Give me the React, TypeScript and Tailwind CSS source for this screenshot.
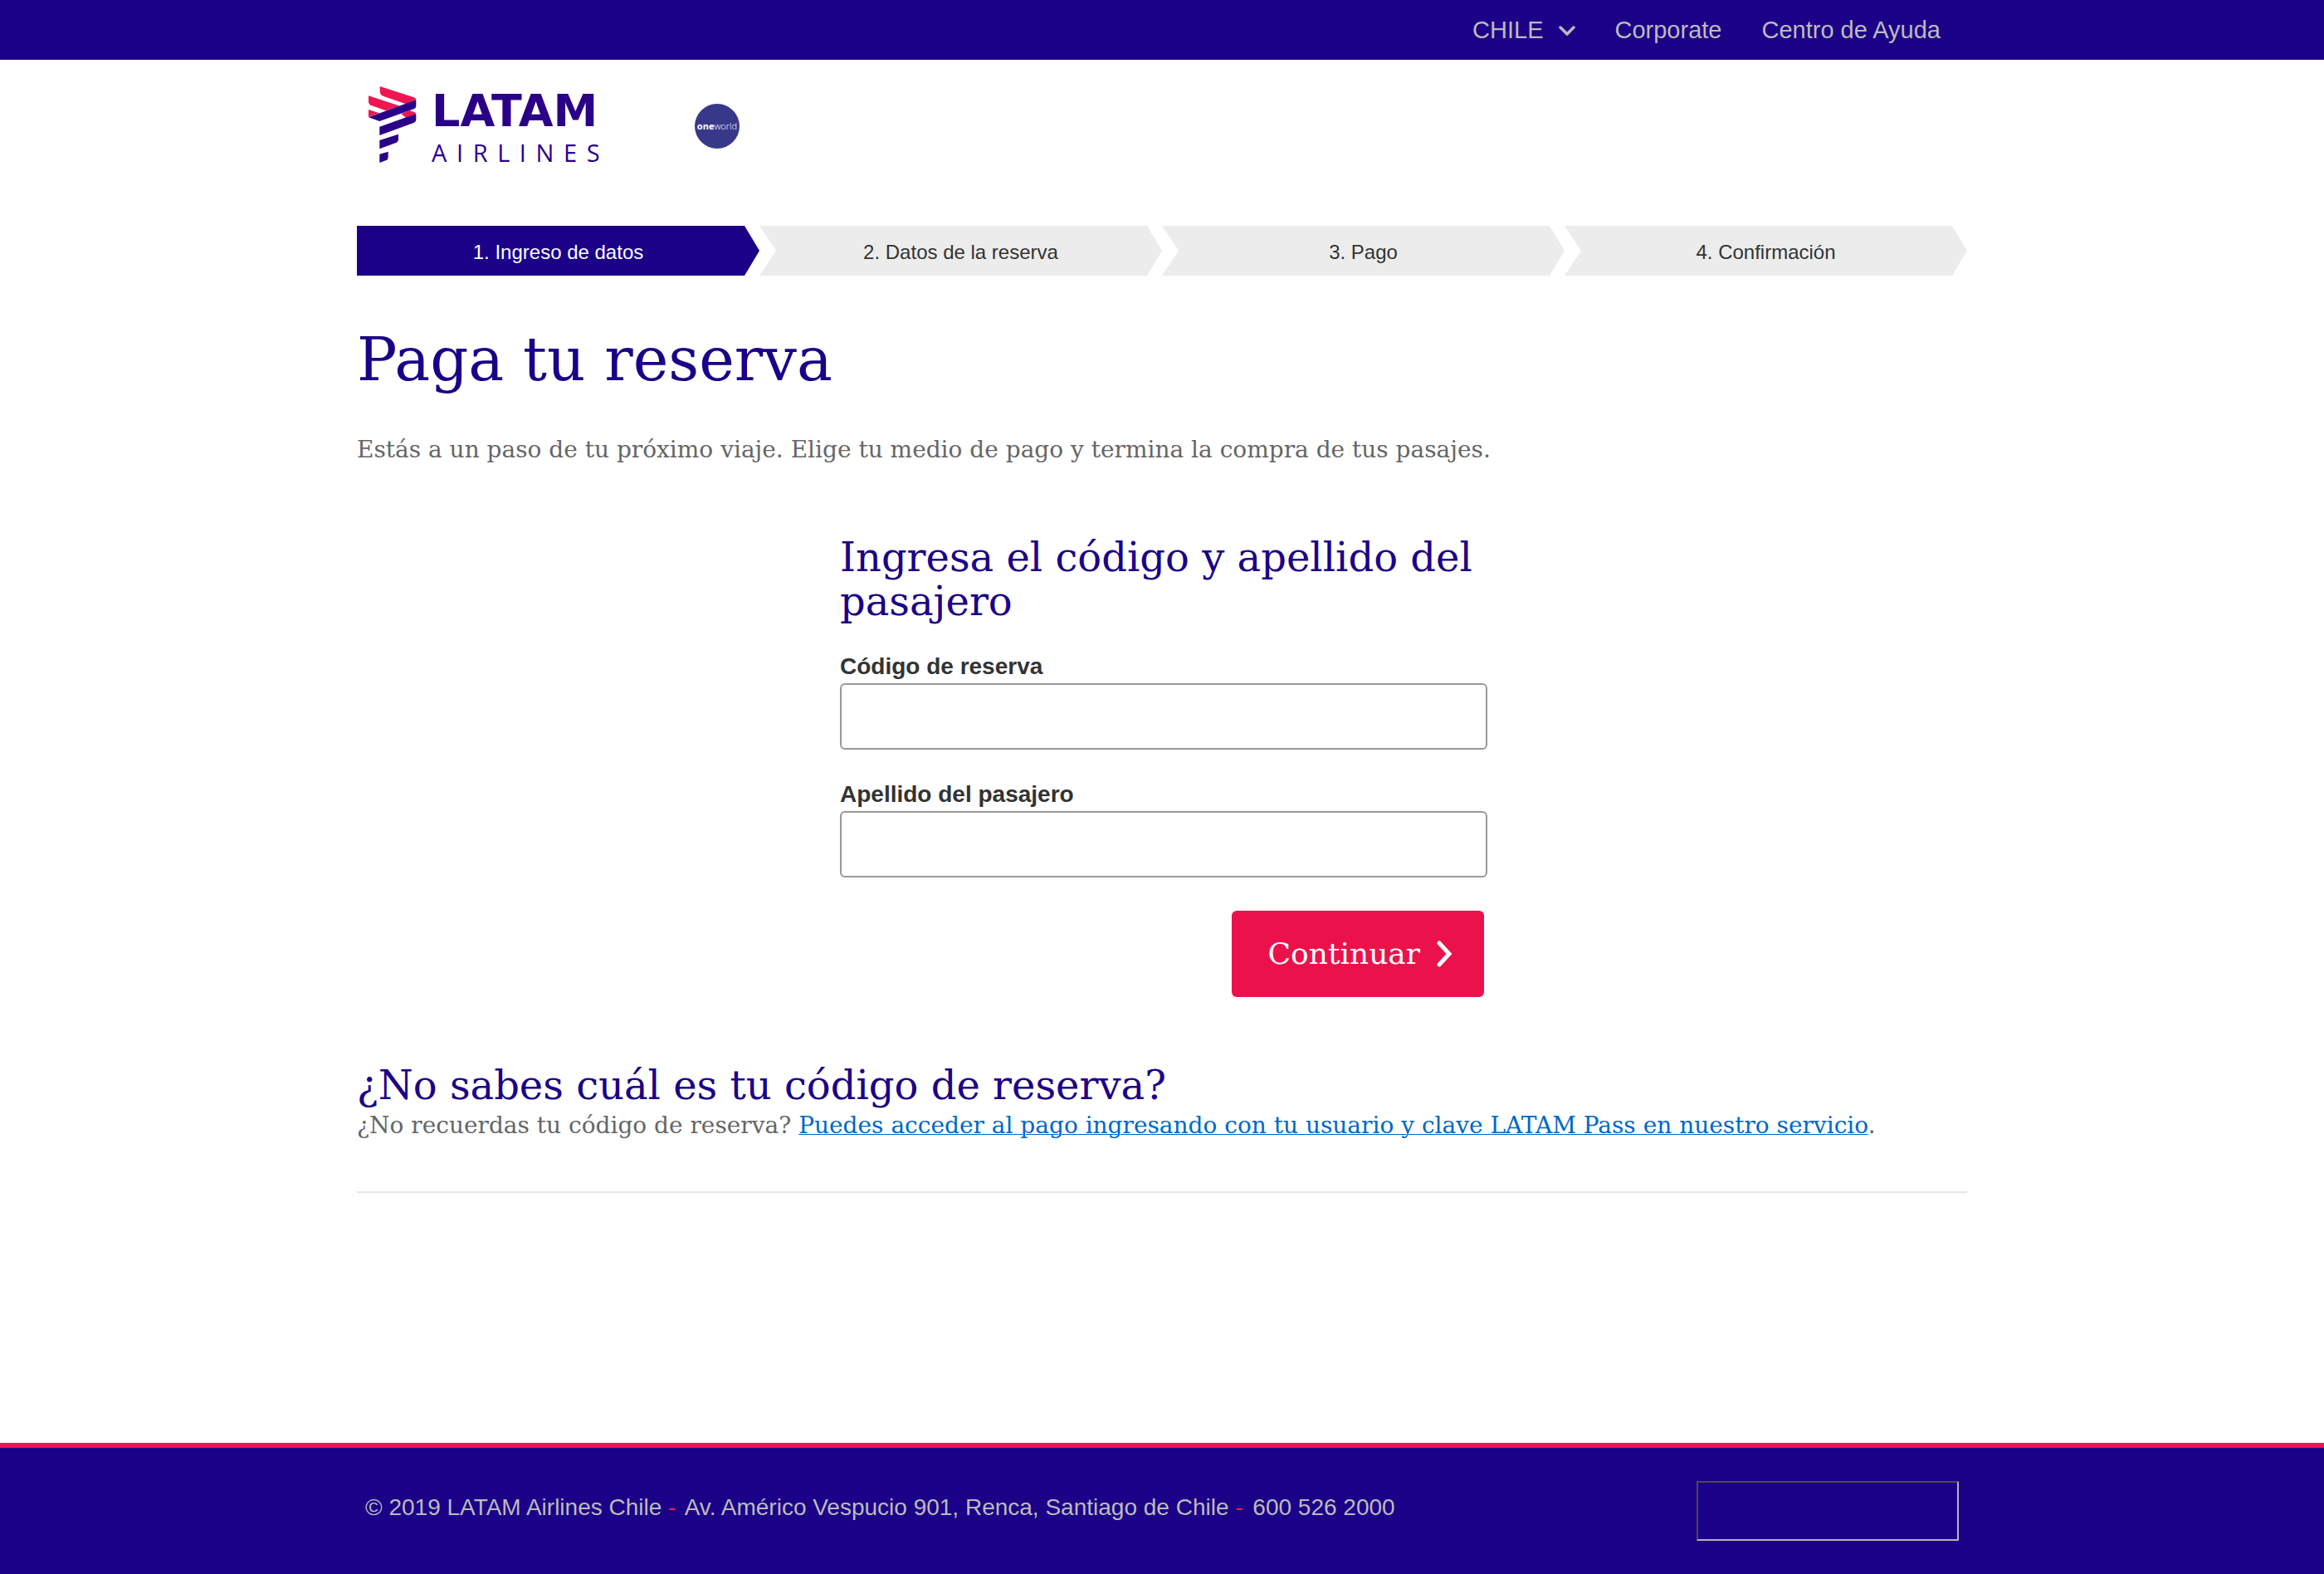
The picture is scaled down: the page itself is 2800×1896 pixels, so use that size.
const steps = ["1. Ingreso de datos", "2. Datos de la reserva", "3. Pago", "4. Confirmación"];

function LatamLogo() {
  return (
    <a href="#" aria-label="LATAM Airlines" className="flex h-[98px] w-[311px] items-start gap-[18px] text-[#2a0088]">
      <svg viewBox="66 66 180 285" className="h-[95px] w-[60px] shrink-0" aria-hidden="true">
        <g fill="#f01652">
          <path d="M113 72 L236 112 Q244 115 244 121 L207 136 L125 107 Q113 103 113 90Z" />
          <path d="M72 106 L186 143 L135 160 L82 141 Q72 137 72 126Z" />
          <path d="M72 156 L111 169 L72 183Z" />
          <path d="M220 159 L238 165 Q243 167 243 172 L207 185 L190 171Z" />
        </g>
        <g fill="#2a0088">
          <path d="M72 184 L244 121 V142 Q244 150 237 153 L112 198Z" />
          <path d="M112 218 L244 171 V192 Q244 200 237 203 L112 249Z" />
          <path d="M112 267 L180 245 V264 Q180 271 173 275 L112 298Z" />
          <path d="M112 317 L143 308 V328 Q143 336 136 339 L112 348Z" />
        </g>
      </svg>
      <span className="flex flex-col pt-1.5">
        <span className="font-['DejaVu_Sans'] text-[54px] leading-[52px] font-bold">LATAM</span>
        <span className="font-['Open_Sans'] text-[29px] leading-[48px] tracking-[0.4em]">AIRLINES</span>
      </span>
    </a>
  );
}

function Field({ id, label }: { id: string; label: string }) {
  return (
    <div className="flex flex-col">
      <label htmlFor={id} className="text-[28px] leading-[36px] font-bold text-[#333]">
        {label}
      </label>
      <input
        id={id}
        type="text"
        className="mt-0.5 h-20 w-[calc(100%+4px)] rounded-md border-2 border-[#999] bg-white px-4 text-[28px]"
      />
    </div>
  );
}

export default function App() {
  return (
    <div className="flex min-h-screen flex-col bg-white font-['Liberation_Sans',sans-serif]">
      <div className="bg-[#1b0088]">
        <nav className="mx-auto flex h-[72px] w-full max-w-[1940px] items-center justify-end gap-12 pt-0.5 pr-8 text-[29px] text-[#bbb]">
          <button type="button" className="flex items-center gap-[18px]">
            CHILE
            <svg viewBox="0 0 20 12" className="h-3 w-5" fill="none" stroke="currentColor" strokeWidth="3.5" strokeLinecap="round" aria-hidden="true">
              <path d="M2 2 L10 10 L18 2" />
            </svg>
          </button>
          <a href="#">Corporate</a>
          <a href="#">Centro de Ayuda</a>
        </nav>
      </div>

      <header className="mx-auto flex h-[200px] w-full max-w-[1940px] items-start pt-[30px] pl-3">
        <LatamLogo />
        <a
          href="#"
          className="mt-[23px] ml-[84px] flex size-[54px] items-center justify-center rounded-full bg-[#38388a] font-['Open_Sans'] text-[11px] text-white"
        >
          <b>one</b>
          <span className="font-light">world</span>
        </a>
      </header>

      <main className="mx-auto w-full max-w-[1940px] flex-1 font-['DejaVu_Serif',serif]">
        <ol className="flex font-['Liberation_Sans',sans-serif] text-2xl">
          {steps.map((step, i) => (
            <li
              key={step}
              className={
                i === 0
                  ? "flex h-[60px] flex-1 items-center justify-center bg-[#1b0088] pt-1 text-white [clip-path:polygon(0_0,calc(100%-18px)_0,100%_50%,calc(100%-18px)_100%,0_100%)]"
                  : "flex h-[60px] flex-1 items-center justify-center bg-[#ececec] pt-1 text-[#333] [clip-path:polygon(0_0,calc(100%-18px)_0,100%_50%,calc(100%-18px)_100%,0_100%,20px_50%)]"
              }
            >
              {step}
            </li>
          ))}
        </ol>

        <h1 className="mt-[61px] text-[72px] leading-[80px] text-[#1b0088]">Paga tu reserva</h1>
        <p className="mt-[49px] text-[28px] leading-10 text-[#666]">
          Estás a un paso de tu próximo viaje. Elige tu medio de pago y termina la compra de tus pasajes.
        </p>

        <form className="mt-[83px] ml-[30%] w-2/5" onSubmit={(e) => e.preventDefault()}>
          <h2 className="text-5xl leading-[53px] text-[#1b0088]">Ingresa el código y apellido del pasajero</h2>
          <div className="mt-[34px] flex flex-col gap-9 font-['Liberation_Sans',sans-serif]">
            <Field id="codigo" label="Código de reserva" />
            <Field id="apellido" label="Apellido del pasajero" />
          </div>
          <div className="mt-10 flex justify-end">
            <button
              type="submit"
              className="flex h-[104px] items-center gap-5 rounded-md bg-[#eb124b] pr-[39px] pl-11 text-4xl text-white"
            >
              Continuar
              <svg viewBox="0 0 18 32" className="h-8 w-[18px]" fill="none" stroke="currentColor" strokeWidth="5" strokeLinecap="round" aria-hidden="true">
                <path d="M3 3 L15 16 L3 29" />
              </svg>
            </button>
          </div>
        </form>

        <section className="mt-20 border-b-2 border-[#e6e6e6] pb-[59px]">
          <h2 className="text-5xl leading-[53px] text-[#1b0088]">¿No sabes cuál es tu código de reserva?</h2>
          <p className="mt-0.5 text-[28px] leading-10 text-[#666]">
            ¿No recuerdas tu código de reserva?{" "}
            <a href="#" className="text-[#0067c5] underline decoration-1">
              Puedes acceder al pago ingresando con tu usuario y clave LATAM Pass en nuestro servicio
            </a>
            .
          </p>
        </section>
      </main>

      <footer className="border-t-[6px] border-[#f01652] bg-[#1b0088]">
        <div className="mx-auto flex w-full max-w-[1940px] items-start justify-between px-2.5 py-10">
          <p className="text-[28px] leading-[64px] text-[#bbb]">
            © 2019 LATAM Airlines Chile <span className="mr-1 text-[#f01652]">-</span>{" "}
            Av. Américo Vespucio 901, Renca, Santiago de Chile <span className="mr-1 text-[#f01652]">-</span>{" "}
            600 526 2000
          </p>
          <div className="h-[72px] w-[316px] border-2 border-t-[#4c4c4c] border-r-[#b4b4b4] border-b-[#b4b4b4] border-l-[#4c4c4c]" />
        </div>
      </footer>
    </div>
  );
}
